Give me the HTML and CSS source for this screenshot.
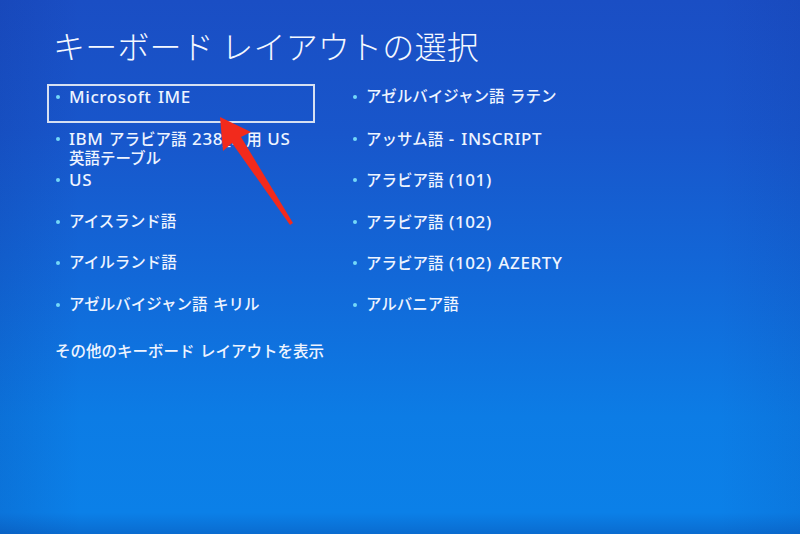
FILE: index.html
```html
<!DOCTYPE html>
<html lang="ja">
<head>
<meta charset="utf-8">
<title>キーボード レイアウトの選択</title>
<link rel="stylesheet" href="styles.css">
</head>
<body>
<main class="screen">
  <h1 class="title">キーボード レイアウトの選択</h1>
  <ul class="layouts">
    <li class="item selected"><span class="dot"></span><span class="label"><span class="lat">Microsoft IME</span></span></li>
    <li class="item"><span class="dot"></span><span class="label"><span class="lat">IBM</span> アラビア語 <span class="lat">238_L</span> 用 <span class="lat">US</span> <span class="nowrap">英語テーブル</span></span></li>
    <li class="item"><span class="dot"></span><span class="label"><span class="lat">US</span></span></li>
    <li class="item"><span class="dot"></span><span class="label">アイスランド語</span></li>
    <li class="item"><span class="dot"></span><span class="label">アイルランド語</span></li>
    <li class="item"><span class="dot"></span><span class="label">アゼルバイジャン語 キリル</span></li>
    <li class="item"><span class="dot"></span><span class="label">アゼルバイジャン語 ラテン</span></li>
    <li class="item"><span class="dot"></span><span class="label">アッサム語 <span class="lat">- INSCRIPT</span></span></li>
    <li class="item"><span class="dot"></span><span class="label">アラビア語 <span class="lat">(101)</span></span></li>
    <li class="item"><span class="dot"></span><span class="label">アラビア語 <span class="lat">(102)</span></span></li>
    <li class="item"><span class="dot"></span><span class="label">アラビア語 <span class="lat">(102) AZERTY</span></span></li>
    <li class="item"><span class="dot"></span><span class="label">アルバニア語</span></li>
  </ul>
  <a class="more">その他のキーボード レイアウトを表示</a>
  <svg class="arrow" viewBox="0 0 800 534" width="800" height="534" aria-hidden="true">
    <polygon points="220,117 251,132 241,137 293,223 290,225 232,143 223,151"/>
  </svg>
</main>
</body>
</html>
```

FILE: styles.css
```css
* { box-sizing: border-box; }

html, body {
  margin: 0;
  padding: 0;
}

body {
  width: 800px;
  height: 534px;
  overflow: hidden;
  font-family: "Noto Sans", "Noto Sans CJK JP", sans-serif;
  color: #eef4ff;
  background:
    linear-gradient(90deg, rgba(10, 30, 120, 0.12) 0%, rgba(10, 30, 120, 0) 10%, rgba(10, 30, 120, 0) 90%, rgba(10, 30, 120, 0.08) 100%),
    linear-gradient(180deg, #1a4ec4 0%, #1856cb 25%, #1268d8 52%, #0c7ce5 78%, #0b80e8 96%, #0a6cd0 100%);
}

.screen {
  position: relative;
  width: 800px;
  height: 534px;
  padding: 25px 0 0 47px;
}

.title {
  margin: 0 0 19px 6px;
  font-family: "Noto Sans CJK JP", sans-serif;
  font-weight: 300;
  font-size: 32px;
  line-height: 40px;
  color: #f4f8ff;
  letter-spacing: 0.2px;
}

.layouts {
  list-style: none;
  margin: 0;
  padding: 0;
  display: grid;
  grid-auto-flow: column;
  grid-template-rows: repeat(6, 41.6px);
  grid-template-columns: 268px 268px;
  column-gap: 29px;
}

.item {
  height: 39px;
  display: flex;
  align-items: flex-start;
  padding: 3px 8px 0 9px;
  font-size: 15.5px;
  font-weight: 500;
  line-height: 19px;
  word-spacing: 1.5px;
}

.item.selected {
  border: 2px solid #d6e0f2;
  padding: 1px 6px 0 7px;
}

.dot {
  flex: none;
  width: 4px;
  height: 4px;
  margin: 8px 9px 0 0;
  border-radius: 50%;
  background: #74d8f8;
}

.label {
  width: 240px;
}

.lat {
  font-size: 17px;
  letter-spacing: 0.6px;
}

.nowrap { white-space: nowrap; }

.more {
  display: block;
  margin: 8px 0 0 8px;
  font-size: 15.5px;
  font-weight: 500;
  line-height: 19px;
  word-spacing: 1.5px;
  color: #eef4ff;
}

.arrow {
  position: absolute;
  left: 0;
  top: 0;
  fill: #f22a1c;
}
```
